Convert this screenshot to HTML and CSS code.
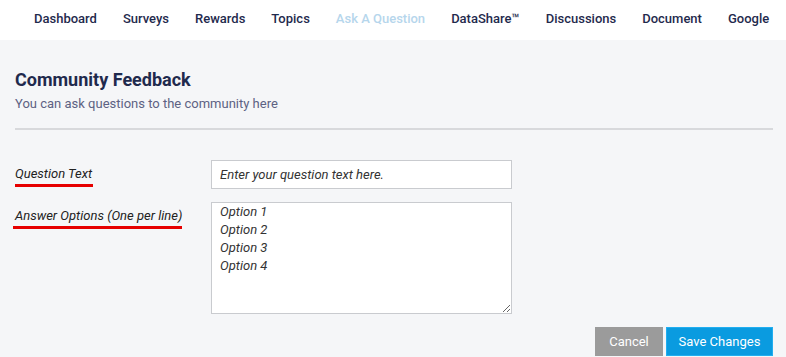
FILE: index.html
```html
<!DOCTYPE html>
<html lang="en">
<head>
    <meta charset="UTF-8">
    <meta name="viewport" content="width=device-width, initial-scale=1.0">
    <title>Community Feedback</title>
    <link rel="stylesheet" href="styles.css">
</head>
<body>
    <nav class="topnav">
        <a href="#">Dashboard</a>
        <a href="#">Surveys</a>
        <a href="#">Rewards</a>
        <a href="#">Topics</a>
        <a href="#" class="active">Ask A Question</a>
        <a href="#">DataShare™</a>
        <a href="#">Discussions</a>
        <a href="#">Document</a>
        <a href="#">Google</a>
    </nav>

    <div class="page">
        <div class="page-header">
            <h1>Community Feedback</h1>
            <p>You can ask questions to the community here</p>
        </div>

        <form class="feedback-form">
            <div class="form-row">
                <label class="field-label" for="question">Question Text</label>
                <input type="text" id="question" placeholder="Enter your question text here.">
            </div>
            <div class="form-row">
                <label class="field-label" for="options">Answer Options (One per line)</label>
                <textarea id="options">Option 1
Option 2
Option 3
Option 4</textarea>
            </div>
            <div class="actions">
                <button type="button" class="btn btn-cancel">Cancel</button>
                <button type="button" class="btn btn-save">Save Changes</button>
            </div>
        </form>
    </div>
</body>
</html>
```

FILE: styles.css
```css
body {
    margin: 0;
    font-family: Roboto, "Open Sans", sans-serif;
    background-color: #f5f6f8;
    color: #222;
}
.topnav {
    display: flex;
    box-sizing: border-box;
    height: 40px;
    align-items: center;
    padding: 0 0 4px 21px;
    background-color: #fff;
}
.topnav a {
    padding: 0 13px;
    font-size: 13px;
    font-weight: 500;
    color: #1f2a4d;
    text-decoration: none;
    white-space: nowrap;
}
.topnav a.active {
    color: #b6d6ec;
}
.page {
    padding: 29px 13px 0 15px;
}
.page-header {
    padding-bottom: 17px;
    border-bottom: 2px solid #d8d9dc;
}
.page-header h1 {
    margin: 0;
    font-size: 18px;
    font-weight: 700;
    color: #1f2a4d;
    line-height: 22px;
}
.page-header p {
    margin: 5px 0 0;
    font-size: 13px;
    color: #5d6283;
}
.feedback-form {
    padding-top: 30px;
}
.form-row {
    display: grid;
    grid-template-columns: 196px 301px;
    align-items: start;
    margin-bottom: 13px;
}
.field-label {
    justify-self: start;
    margin-top: 6px;
    font-size: 13px;
    font-style: italic;
    color: #222;
}
.field-label::after {
    content: "";
    display: block;
    height: 3px;
    margin-top: 3px;
    margin-left: -2px;
    background-color: #e60000;
}
.form-row:first-child .field-label::after {
    margin-left: 0;
    margin-right: -1px;
}
input,
textarea {
    box-sizing: border-box;
    width: 301px;
    padding: 4px 8px;
    border: 1px solid #c9cbcf;
    background-color: #fff;
    font-family: inherit;
    font-size: 13px;
    font-style: italic;
    color: #333;
}
input {
    height: 29px;
}
input::placeholder {
    color: #333;
}
textarea {
    display: block;
    height: 112px;
    line-height: 18px;
    padding-top: 0;
}
.actions {
    display: flex;
    justify-content: flex-end;
    gap: 3px;
    margin-top: 1px;
}
.btn {
    height: 29px;
    padding: 0;
    border: 1px solid transparent;
    font-family: inherit;
    font-size: 13px;
    color: #fff;
    white-space: nowrap;
}
.btn-cancel {
    width: 68px;
    background-color: #9b9b9b;
}
.btn-save {
    width: 107px;
    background-color: #0a9be0;
    border-color: #21aef0;
}
```
